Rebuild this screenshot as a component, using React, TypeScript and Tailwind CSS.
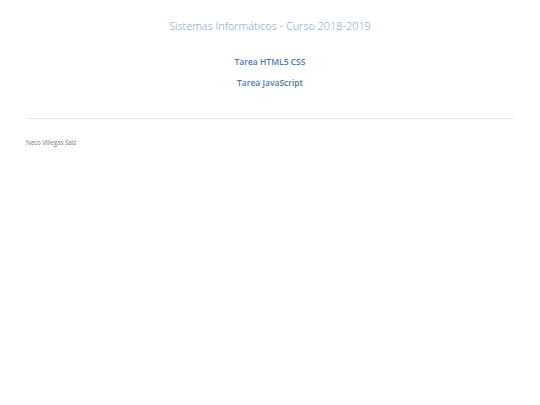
export default function App() {
  return (
    <div className="min-h-[405px] bg-white font-['Open_Sans',sans-serif]">
      <header className="pt-[17px] text-center">
        <h1 className="text-[10.9px] font-light leading-[18px] text-[#7d9cc4]">
          Sistemas Informáticos - Curso 2018-2019
        </h1>
      </header>
      <nav className="mt-[20px] flex flex-col items-center gap-[8px]">
        <a href="#" className="text-[8.5px] font-semibold leading-[13px] text-[#4f79ad]">
          Tarea HTML5 CSS
        </a>
        <a href="#" className="text-[8.5px] font-semibold leading-[13px] text-[#4f79ad]">
          Tarea JavaScript
        </a>
      </nav>
      <div className="mx-[26px] mt-[29px] border-t border-[#eaeaea]" />
      <footer className="px-[26px] pt-[19px]">
        <p className="text-[6.3px] leading-[9px] tracking-[-0.1px] text-[#7a7a7a]">Neco Villegas Saiz</p>
      </footer>
    </div>
  );
}
